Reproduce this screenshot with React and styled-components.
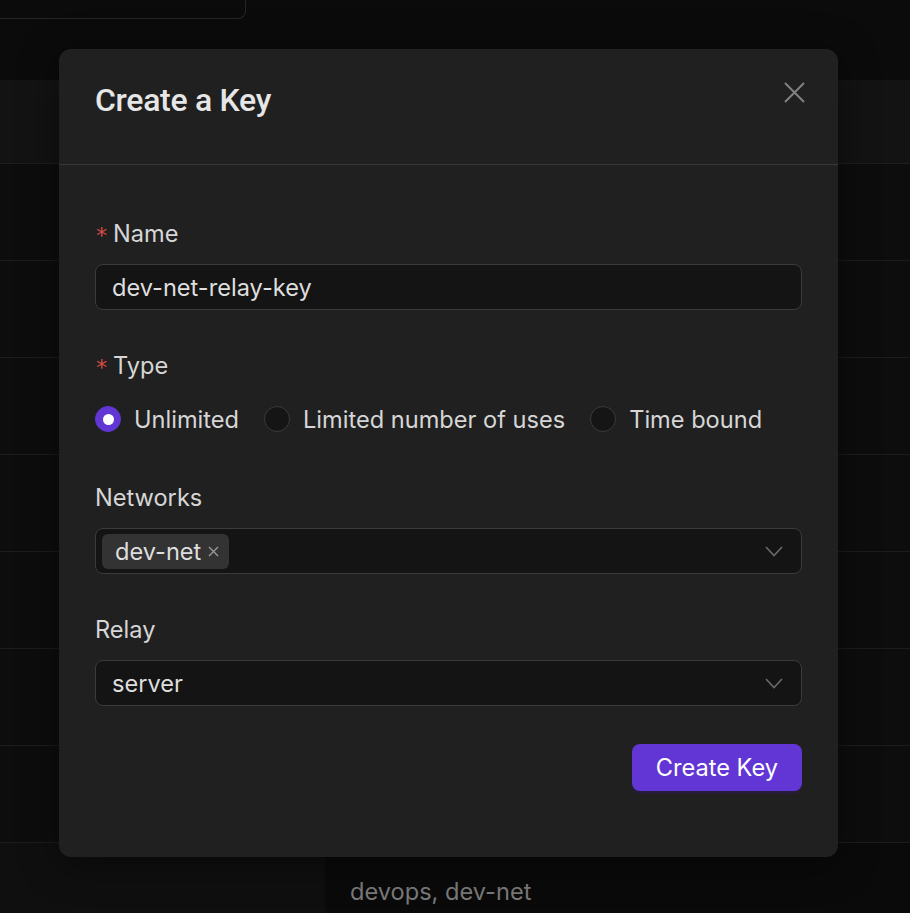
import styled, { createGlobalStyle } from 'styled-components';

const GlobalStyle = createGlobalStyle`
    * {
        box-sizing: border-box;
    }

    body {
        margin: 0;
        background: #0b0b0b;
        font-family: Inter, "Noto Sans", sans-serif;
    }
`;

const Page = styled.div`
    position: relative;
    height: 913px;
    overflow: hidden;
    background: #0b0b0b;
`;

const TopBar = styled.div`
    height: 80px;
`;

const SearchBox = styled.div`
    width: 246px;
    height: 19px;
    border: 1px solid #262626;
    border-top: none;
    border-left: none;
    border-bottom-right-radius: 8px;
`;

const Table = styled.div`
    display: flex;
    flex-direction: column;
`;

const HeadRow = styled.div`
    height: 84px;
    background: #131313;
    border-bottom: 1px solid #1e1e1e;
`;

const Row = styled.div`
    display: grid;
    grid-template-columns: 325px 1fr;
    height: 97px;
    border-bottom: 1px solid #1c1c1c;
    background: #0d0d0d;
`;

const Cell = styled.div`
    display: flex;
    align-items: center;
    padding: 0 25px;
    background: ${ ( { dim } ) => ( dim ? '#0a0a0a' : 'transparent' ) };
    color: #7a7a7a;
    font-size: 23.6px;
`;

const LastRow = styled( Row )`
    background: #0f0f0f;
    border-bottom: none;

    ${ Cell } {
        align-items: flex-start;
        padding-top: 34px;
    }
`;

const Modal = styled.div`
    position: absolute;
    left: 59px;
    top: 49px;
    width: 779px;
    height: 808px;
    background: #202020;
    border-radius: 12px;
    box-shadow: 0 6px 40px rgba( 0, 0, 0, 0.45 );
`;

const ModalHeader = styled.header`
    display: flex;
    justify-content: space-between;
    align-items: flex-start;
    height: 116px;
    padding: 33px 33px 0 36px;
    border-bottom: 1px solid #383838;
`;

const Title = styled.h2`
    margin: 0;
    font-family: Roboto, "Liberation Sans", sans-serif;
    font-weight: 500;
    font-size: 32px;
    line-height: 36px;
    color: #e6e6e6;
    letter-spacing: -0.3px;
`;

const CloseButton = styled.button`
    display: flex;
    padding: 0;
    border: none;
    background: none;
    cursor: pointer;
`;

const Form = styled.form`
    display: flex;
    flex-direction: column;
    gap: 40px;
    padding: 53px 36px 0;
`;

const Field = styled.div`
    display: flex;
    flex-direction: column;
    gap: 16px;
`;

const Label = styled.label`
    display: flex;
    align-items: center;
    height: 30px;
    font-size: 23.6px;
    color: #d6d6d6;
`;

const Required = styled.span`
    display: inline-block;
    width: 11px;
    margin-right: 7px;
    margin-top: 6px;
    color: #d84a47;
    font-family: "DejaVu Sans Mono", monospace;
    font-size: 22px;
    line-height: 1;
`;

const Control = styled.div`
    display: flex;
    align-items: center;
    height: 46px;
    padding: 0 18px 0 ${ ( { tags } ) => ( tags ? '6px' : '16px' ) };
    background: #141414;
    border: 1px solid #3b3b3b;
    border-radius: 8px;
    font-size: 23.6px;
    color: #dedede;
`;

const Value = styled.span`
    flex: 1;
`;

const Tags = styled.div`
    display: flex;
    flex: 1;
    gap: 6px;
`;

const Tag = styled.span`
    display: inline-flex;
    align-items: center;
    gap: 6px;
    height: 35px;
    padding: 0 9px 0 13px;
    background: #333333;
    border-radius: 6px;
    color: #dedede;
`;

const TagRemove = styled.span`
    display: flex;
    margin-top: 1px;
`;

const RadioGroup = styled.div`
    display: flex;
    align-items: center;
    gap: 25px;
    height: 46px;
`;

const RadioItem = styled.label`
    display: flex;
    align-items: center;
    gap: 13px;
    font-size: 23.6px;
    color: #d6d6d6;
`;

const RadioDot = styled.span`
    display: flex;
    align-items: center;
    justify-content: center;
    width: 26px;
    height: 26px;
    border-radius: 50%;
    background: ${ ( { checked } ) => ( checked ? '#6136d4' : '#151515' ) };
    border: 1px solid ${ ( { checked } ) => ( checked ? '#6136d4' : '#3a3a3a' ) };

    &::after {
        content: '';
        display: ${ ( { checked } ) => ( checked ? 'block' : 'none' ) };
        width: 11px;
        height: 11px;
        border-radius: 50%;
        background: #ffffff;
    }
`;

const Footer = styled.div`
    display: flex;
    justify-content: flex-end;
    margin-top: -2px;
`;

const SubmitButton = styled.button`
    height: 47px;
    padding: 0 24px;
    border: none;
    border-radius: 8px;
    background: #6136d4;
    box-shadow: 0 3px 0 rgba( 60, 20, 140, 0.25 );
    color: #ffffff;
    font-family: Inter, "Noto Sans", sans-serif;
    font-size: 23.6px;
    cursor: pointer;
`;

const Chevron = () => (
    <svg width="18" height="11" viewBox="0 0 18 11" fill="none">
        <path d="M1 1l8 8.5L17 1" stroke="#6a6a6a" strokeWidth="1.6" />
    </svg>
);

const types = [ 'Unlimited', 'Limited number of uses', 'Time bound' ];

export default function App() {
    return (
        <Page>
            <GlobalStyle />

            <TopBar>
                <SearchBox />
            </TopBar>

            <Table>
                <HeadRow />
                { [ 0, 1, 2, 3, 4, 5, 6 ].map( ( i ) => (
                    <Row key={ i }>
                        <Cell />
                        <Cell />
                    </Row>
                ) ) }
                <LastRow>
                    <Cell />
                    <Cell dim>devops, dev-net</Cell>
                </LastRow>
            </Table>

            <Modal>
                <ModalHeader>
                    <Title>Create a Key</Title>
                    <CloseButton type="button" aria-label="Close">
                        <svg width="21" height="21" viewBox="0 0 21 21" fill="none">
                            <path d="M1 1l19 19M20 1L1 20" stroke="#828282" strokeWidth="2" />
                        </svg>
                    </CloseButton>
                </ModalHeader>

                <Form>
                    <Field>
                        <Label><Required>*</Required>Name</Label>
                        <Control>
                            <Value>dev-net-relay-key</Value>
                        </Control>
                    </Field>

                    <Field>
                        <Label><Required>*</Required>Type</Label>
                        <RadioGroup>
                            { types.map( ( type, i ) => (
                                <RadioItem key={ type }>
                                    <RadioDot checked={ i === 0 } />
                                    { type }
                                </RadioItem>
                            ) ) }
                        </RadioGroup>
                    </Field>

                    <Field>
                        <Label>Networks</Label>
                        <Control tags>
                            <Tags>
                                <Tag>
                                    dev-net
                                    <TagRemove>
                                        <svg width="13" height="13" viewBox="0 0 13 13" fill="none">
                                            <path d="M2 2l9 9M11 2l-9 9" stroke="#9a9a9a" strokeWidth="1.4" />
                                        </svg>
                                    </TagRemove>
                                </Tag>
                            </Tags>
                            <Chevron />
                        </Control>
                    </Field>

                    <Field>
                        <Label>Relay</Label>
                        <Control>
                            <Value>server</Value>
                            <Chevron />
                        </Control>
                    </Field>

                    <Footer>
                        <SubmitButton type="button">Create Key</SubmitButton>
                    </Footer>
                </Form>
            </Modal>
        </Page>
    );
}
